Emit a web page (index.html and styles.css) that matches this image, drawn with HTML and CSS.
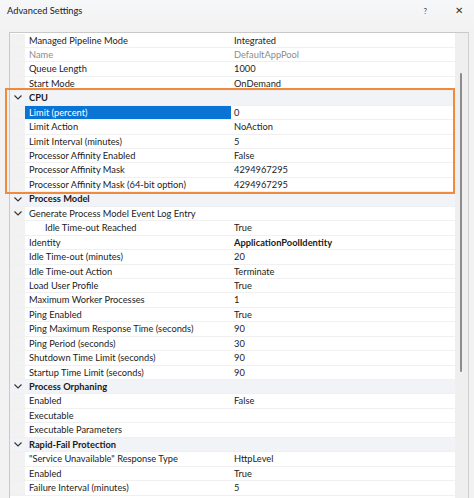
FILE: index.html
```html
<!DOCTYPE html>
<html>
<head>
<meta charset="utf-8">
<link rel="stylesheet" href="styles.css">
</head>
<body>
<div class="window">
  <div class="titlebar">
    <span class="title">Advanced Settings</span>
    <span class="tb-btns"><span class="help">?</span><span class="close">✕</span></span>
  </div>
  <div class="grid-frame">
    <div class="grid">
      <div class="row"><div class="gut"></div><div class="name">Managed Pipeline Mode</div><div class="val">Integrated</div></div>
      <div class="row dis"><div class="gut"></div><div class="name">Name</div><div class="val">DefaultAppPool</div></div>
      <div class="row"><div class="gut"></div><div class="name">Queue Length</div><div class="val">1000</div></div>
      <div class="row"><div class="gut"></div><div class="name">Start Mode</div><div class="val">OnDemand</div></div>
      <div class="row cat"><div class="gut"><svg class="chev" viewBox="0 0 8 5"><path d="M0.5 0.5 L4 4 L7.5 0.5" /></svg></div><div class="name">CPU</div><div class="val"></div></div>
      <div class="row sel"><div class="gut"></div><div class="name">Limit (percent)</div><div class="val">0</div></div>
      <div class="row"><div class="gut"></div><div class="name">Limit Action</div><div class="val">NoAction</div></div>
      <div class="row"><div class="gut"></div><div class="name">Limit Interval (minutes)</div><div class="val">5</div></div>
      <div class="row"><div class="gut"></div><div class="name">Processor Affinity Enabled</div><div class="val">False</div></div>
      <div class="row"><div class="gut"></div><div class="name">Processor Affinity Mask</div><div class="val">4294967295</div></div>
      <div class="row"><div class="gut"></div><div class="name">Processor Affinity Mask (64-bit option)</div><div class="val">4294967295</div></div>
      <div class="row cat"><div class="gut"><svg class="chev" viewBox="0 0 8 5"><path d="M0.5 0.5 L4 4 L7.5 0.5" /></svg></div><div class="name">Process Model</div><div class="val"></div></div>
      <div class="row"><div class="gut"><svg class="chev" viewBox="0 0 8 5"><path d="M0.5 0.5 L4 4 L7.5 0.5" /></svg></div><div class="name">Generate Process Model Event Log Entry</div><div class="val"></div></div>
      <div class="row"><div class="gut"></div><div class="name sub">Idle Time-out Reached</div><div class="val">True</div></div>
      <div class="row"><div class="gut"></div><div class="name">Identity</div><div class="val bold">ApplicationPoolIdentity</div></div>
      <div class="row"><div class="gut"></div><div class="name">Idle Time-out (minutes)</div><div class="val">20</div></div>
      <div class="row"><div class="gut"></div><div class="name">Idle Time-out Action</div><div class="val">Terminate</div></div>
      <div class="row"><div class="gut"></div><div class="name">Load User Profile</div><div class="val">True</div></div>
      <div class="row"><div class="gut"></div><div class="name">Maximum Worker Processes</div><div class="val">1</div></div>
      <div class="row"><div class="gut"></div><div class="name">Ping Enabled</div><div class="val">True</div></div>
      <div class="row"><div class="gut"></div><div class="name">Ping Maximum Response Time (seconds)</div><div class="val">90</div></div>
      <div class="row"><div class="gut"></div><div class="name">Ping Period (seconds)</div><div class="val">30</div></div>
      <div class="row"><div class="gut"></div><div class="name">Shutdown Time Limit (seconds)</div><div class="val">90</div></div>
      <div class="row"><div class="gut"></div><div class="name">Startup Time Limit (seconds)</div><div class="val">90</div></div>
      <div class="row cat"><div class="gut"><svg class="chev" viewBox="0 0 8 5"><path d="M0.5 0.5 L4 4 L7.5 0.5" /></svg></div><div class="name">Process Orphaning</div><div class="val"></div></div>
      <div class="row"><div class="gut"></div><div class="name">Enabled</div><div class="val">False</div></div>
      <div class="row"><div class="gut"></div><div class="name">Executable</div><div class="val"></div></div>
      <div class="row"><div class="gut"></div><div class="name">Executable Parameters</div><div class="val"></div></div>
      <div class="row cat"><div class="gut"><svg class="chev" viewBox="0 0 8 5"><path d="M0.5 0.5 L4 4 L7.5 0.5" /></svg></div><div class="name">Rapid-Fail Protection</div><div class="val"></div></div>
      <div class="row"><div class="gut"></div><div class="name">"Service Unavailable" Response Type</div><div class="val">HttpLevel</div></div>
      <div class="row"><div class="gut"></div><div class="name">Enabled</div><div class="val">True</div></div>
      <div class="row"><div class="gut"></div><div class="name">Failure Interval (minutes)</div><div class="val">5</div></div>
    </div>
    <div class="scroll"><div class="thumb"></div></div>
  </div>
  <div class="highlight"></div>
</div>
</body>
</html>
```

FILE: styles.css
```css
html, body {
  margin: 0;
  padding: 0;
}
body {
  background: #f3f3f3;
  font-family: Lato, "Open Sans", sans-serif;
  font-size: 9.3px;
  color: #1b1b1b;
  width: 474px;
  height: 498px;
  overflow: hidden;
}
.window {
  position: relative;
  width: 474px;
  height: 498px;
  background: linear-gradient(#f6f7f9, #f2f2f2 30px);
}
.titlebar {
  height: 32px;
  display: flex;
  justify-content: space-between;
  align-items: flex-start;
}
.title {
  padding: 5px 0 0 7px;
  font-size: 9.3px;
  color: #1a1a1a;
}
.tb-btns {
  display: flex;
  gap: 28px;
  padding: 4px 11px 0 0;
  font-size: 10px;
  color: #333;
}
.help { font-size: 7px; padding-top: 3px; }
.close { font-size: 10px; }
.grid-frame {
  margin-left: 9px;
  width: 460px;
  height: 466px;
  display: flex;
  border-top: 1px solid #c9c9c9;
  border-left: 1px solid #c9c9c9;
  border-right: 1px solid #d0d0d0;
  box-sizing: border-box;
  overflow: hidden;
}
.grid {
  width: 445px;
  background: #ffffff;
  padding-top: 0.5px;
}
.row {
  display: flex;
  height: 14.45px;
  line-height: 14px;
  box-sizing: border-box;
  border-bottom: 1px solid #f0f0f0;
  white-space: nowrap;
}
.gut {
  width: 15px;
  flex: none;
  background: #f2f2f2;
  display: flex;
  align-items: center;
  justify-content: center;
  padding-left: 1px;
  box-sizing: border-box;
}
.chev {
  width: 8px;
  height: 5px;
  fill: none;
  stroke: #333;
  stroke-width: 1.1;
}
.name {
  width: 206px;
  flex: none;
  padding-left: 4px;
  box-sizing: border-box;
  overflow: hidden;
}
.name.sub { padding-left: 20px; }
.val {
  flex: 1;
  padding-left: 3px;
  overflow: hidden;
}
.dis .name, .dis .val { color: #8c8c8c; }
.bold { font-weight: 700; }
.cat { background: #f1f3f7; border-bottom-color: #eef0f4; }
.cat .name { font-weight: 700; }
.cat .gut { background: #f1f3f7; }
.sel .name { background: #0a74d4; color: #ffffff; }
.scroll {
  flex: 1;
  background: #efefef;
  position: relative;
}
.thumb {
  position: absolute;
  left: 5px;
  top: 40px;
  width: 2px;
  height: 299px;
  background: #8c8c8c;
  border-radius: 1px;
}
.highlight {
  position: absolute;
  left: 5px;
  top: 88px;
  width: 450px;
  height: 106px;
  border: 2px solid #ef8a3f;
  box-sizing: border-box;
  pointer-events: none;
}
```
